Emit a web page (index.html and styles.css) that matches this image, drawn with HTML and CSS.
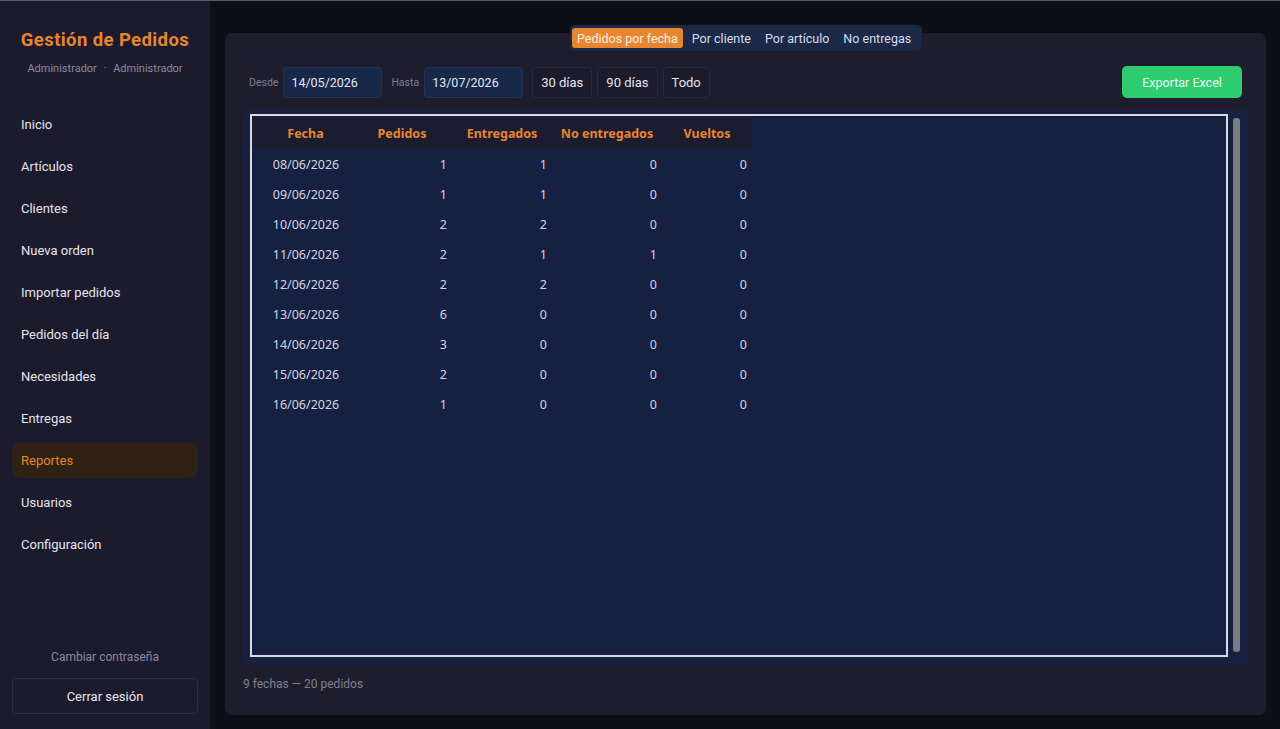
FILE: index.html
```html
<!DOCTYPE html>
<html lang="es">
<head>
    <meta charset="UTF-8">
    <title>Gestión de Pedidos - Reportes</title>
    <link rel="stylesheet" href="styles.css">
</head>
<body>
<div class="app">

    <aside class="sidebar">
        <div class="brand">
            <h1>Gestión de Pedidos</h1>
            <p class="who">Administrador <span>·</span> Administrador</p>
        </div>

        <nav class="menu">
            <a href="#">Inicio</a>
            <a href="#">Artículos</a>
            <a href="#">Clientes</a>
            <a href="#">Nueva orden</a>
            <a href="#">Importar pedidos</a>
            <a href="#">Pedidos del día</a>
            <a href="#">Necesidades</a>
            <a href="#">Entregas</a>
            <a href="#" class="active">Reportes</a>
            <a href="#">Usuarios</a>
            <a href="#">Configuración</a>
        </nav>

        <div class="side-bottom">
            <a href="#" class="pwd">Cambiar contraseña</a>
            <button class="logout">Cerrar sesión</button>
        </div>
    </aside>

    <main class="main">
        <div class="panel">

            <div class="tabs">
                <button class="tab on">Pedidos por fecha</button>
                <button class="tab">Por cliente</button>
                <button class="tab">Por artículo</button>
                <button class="tab">No entregas</button>
            </div>

            <div class="filters">
                <label>Desde</label>
                <div class="date">14/05/2026</div>
                <label>Hasta</label>
                <div class="date">13/07/2026</div>
                <button class="quick">30 días</button>
                <button class="quick">90 días</button>
                <button class="quick">Todo</button>
                <button class="export">Exportar Excel</button>
            </div>

            <div class="grid-wrap">
                <div class="grid">
                    <table>
                        <thead>
                        <tr>
                            <th class="c1">Fecha</th>
                            <th class="c2">Pedidos</th>
                            <th class="c3">Entregados</th>
                            <th class="c4">No entregados</th>
                            <th class="c5">Vueltos</th>
                        </tr>
                        </thead>
                        <tbody>
                        <tr><td>08/06/2026</td><td>1</td><td>1</td><td>0</td><td>0</td></tr>
                        <tr><td>09/06/2026</td><td>1</td><td>1</td><td>0</td><td>0</td></tr>
                        <tr><td>10/06/2026</td><td>2</td><td>2</td><td>0</td><td>0</td></tr>
                        <tr><td>11/06/2026</td><td>2</td><td>1</td><td>1</td><td>0</td></tr>
                        <tr><td>12/06/2026</td><td>2</td><td>2</td><td>0</td><td>0</td></tr>
                        <tr><td>13/06/2026</td><td>6</td><td>0</td><td>0</td><td>0</td></tr>
                        <tr><td>14/06/2026</td><td>3</td><td>0</td><td>0</td><td>0</td></tr>
                        <tr><td>15/06/2026</td><td>2</td><td>0</td><td>0</td><td>0</td></tr>
                        <tr><td>16/06/2026</td><td>1</td><td>0</td><td>0</td><td>0</td></tr>
                        </tbody>
                    </table>
                </div>
                <div class="scroll"><div class="thumb"></div></div>
            </div>

            <p class="summary">9 fechas — 20 pedidos</p>
        </div>
    </main>

</div>
</body>
</html>
```

FILE: styles.css
```css
* {
    box-sizing: border-box;
}

html, body {
    margin: 0;
    height: 100%;
}

body {
    background: #0e0e17;
    border-top: 1px solid #5a5a66;
    font-family: Roboto, "Noto Sans", sans-serif;
    color: #e6e6ee;
    overflow: hidden;
}

button {
    font-family: inherit;
    cursor: pointer;
}

.app {
    display: flex;
    height: 728px;
}

/* sidebar */
.sidebar {
    width: 210px;
    background: #1c1b2e;
    display: flex;
    flex-direction: column;
    padding: 0 12px;
}

.brand {
    padding-top: 28px;
    text-align: center;
}

.brand h1 {
    margin: 0;
    font-size: 18.5px;
    font-weight: 700;
    color: #e8862f;
    letter-spacing: 0.4px;
}

.who {
    margin: 11px 0 0;
    font-size: 11px;
    color: #8a8a9c;
}

.who span {
    margin: 0 4px;
}

.menu {
    margin-top: 32px;
    display: flex;
    flex-direction: column;
    gap: 7px;
}

.menu a {
    display: block;
    height: 35px;
    line-height: 35px;
    padding-left: 9px;
    font-size: 13px;
    color: #e4e4ec;
    text-decoration: none;
    border-radius: 8px;
}

.menu a.active {
    background: #2f2113;
    color: #e8862f;
}

.side-bottom {
    margin-top: auto;
    padding-bottom: 15px;
    text-align: center;
}

.pwd {
    display: block;
    font-size: 12px;
    color: #8a8a9c;
    text-decoration: none;
    margin-bottom: 14px;
}

.logout {
    width: 100%;
    height: 36px;
    background: #1c1b2e;
    border: 1px solid #2d2c40;
    border-radius: 5px;
    color: #e4e4ec;
    font-size: 13px;
}

/* main */
.main {
    flex: 1;
    padding: 32px 14px 14px 15px;
}

.panel {
    height: 682px;
    background: #1e1d2e;
    border-radius: 7px;
    padding: 0 18px 0 18px;
    position: relative;
}

.tabs {
    position: absolute;
    top: -8px;
    left: 345px;
    display: flex;
    gap: 4px;
    padding: 3px 6px 3px 2px;
    background: #1b2947;
    border-radius: 5px;
}

.tab {
    height: 20px;
    padding: 0 5px;
    background: none;
    border: none;
    border-radius: 3px;
    color: #d6dcf0;
    font-size: 12.5px;
}

.tab.on {
    background: #e8862f;
    color: #f6efe6;
}

.filters {
    display: flex;
    align-items: center;
    padding-top: 33px;
    padding-left: 6px;
}

.filters label {
    font-size: 10.5px;
    color: #7d7d8e;
    margin-right: 5px;
}

.date {
    width: 99px;
    height: 31px;
    line-height: 30px;
    padding-left: 7px;
    background: #182848;
    border: 1px solid #243354;
    border-radius: 4px;
    font-size: 12.5px;
    color: #e6e6ee;
    margin-right: 9px;
}

.quick {
    height: 31px;
    padding: 0 8px;
    background: #1c1b2c;
    border: 1px solid #2b2a3c;
    border-radius: 4px;
    color: #e4e4ec;
    font-size: 13px;
    margin-right: 5px;
}

.export {
    margin-left: auto;
    margin-right: 6px;
    width: 120px;
    height: 32px;
    background: #2ecc71;
    border: none;
    border-radius: 5px;
    color: #eafbef;
    font-size: 12.5px;
}

.grid-wrap {
    margin-top: 12px;
    height: 555px;
    background: #18213f;
    border-radius: 4px;
    display: flex;
    padding: 4px 5px 8px 7px;
}

.grid {
    flex: 1;
    background: #162040;
    border: 2px solid #d8dbe4;
}

.scroll {
    width: 15px;
    padding: 4px 3px 5px 5px;
}

.thumb {
    height: 100%;
    background: #7a7a80;
    border-radius: 3px;
}

table {
    border-collapse: collapse;
    font-family: "Noto Sans", sans-serif;
    font-size: 12.5px;
    margin-top: 1px;
}

th {
    height: 32px;
    background: #1b1c30;
    color: #e8862f;
    font-weight: 700;
    text-align: center;
    font-size: 12.5px;
}

th.c1 { width: 100px; padding-left: 8px; }
th.c2 { width: 100px; }
th.c3 { width: 100px; }
th.c4 { width: 110px; }
th.c5 { width: 90px; }

td {
    height: 30px;
    text-align: right;
    padding-right: 5px;
    color: #d2d6e2;
}

td:first-child {
    text-align: center;
    padding-right: 0;
    padding-left: 8px;
}

.summary {
    margin: 12px 0 0;
    font-size: 12px;
    color: #80808f;
}
```
